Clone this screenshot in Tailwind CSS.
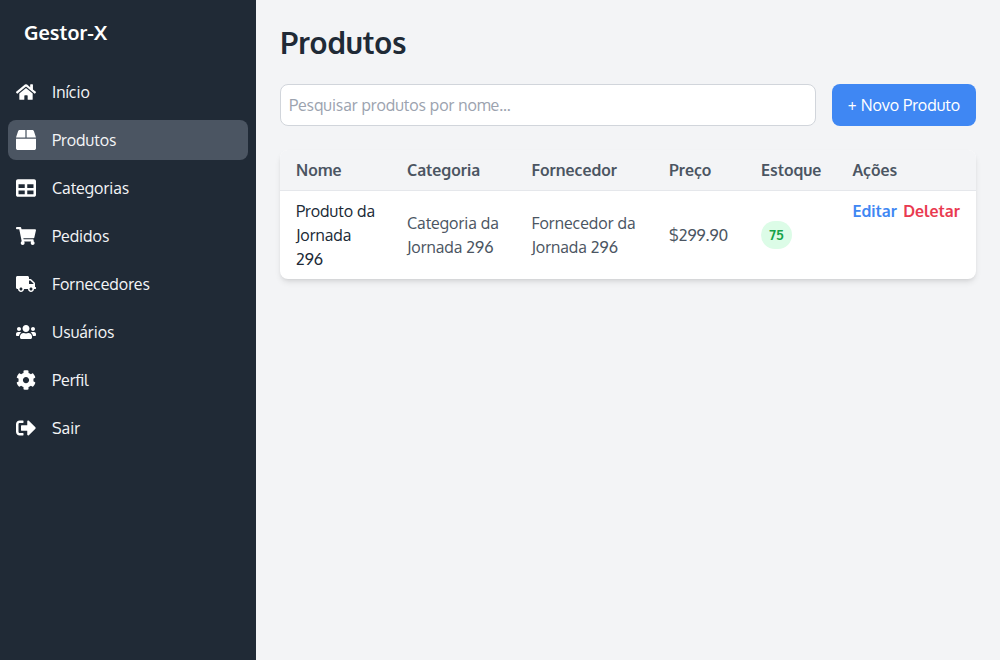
<!DOCTYPE html>
<html lang="pt-BR">
<head>
<meta charset="utf-8">
<title>Gestor-X</title>
<script src="https://cdn.jsdelivr.net/npm/@tailwindcss/browser@4"></script>
</head>
<body class="font-[Oxygen,'Noto_Sans',sans-serif]">
<div class="flex h-screen bg-[#f3f4f6]">
  <aside class="w-64 shrink-0 bg-[#202a36] text-white">
    <div class="px-6 pt-[18px] pb-[26px] text-xl leading-7 font-bold tracking-[0.1px]">Gestor-X</div>
    <nav class="flex flex-col gap-2 px-2">
      <a class="flex h-10 items-center gap-4 rounded-lg px-2"><svg class="size-5" fill="currentColor" viewBox="0 0 576 512"><path d="M280.37 148.26L96 300.11V464a16 16 0 0 0 16 16l112.06-.29a16 16 0 0 0 15.92-16V368a16 16 0 0 1 16-16h64a16 16 0 0 1 16 16v95.64a16 16 0 0 0 16 16.05L464 480a16 16 0 0 0 16-16V300L295.67 148.26a12.19 12.19 0 0 0-15.3 0zM571.6 251.47L488 182.56V44.05a12 12 0 0 0-12-12h-56a12 12 0 0 0-12 12v72.61L318.47 43a48 48 0 0 0-61 0L4.34 251.47a12 12 0 0 0-1.6 16.9l25.5 31A12 12 0 0 0 45.15 301l235.22-193.74a12.19 12.19 0 0 1 15.3 0L530.9 301a12 12 0 0 0 16.9-1.6l25.5-31a12 12 0 0 0-1.7-16.93z"/></svg><span class="text-gray-100">Início</span></a>
      <a class="flex h-10 items-center gap-4 rounded-lg bg-[#4b5562] px-2"><svg class="size-5" fill="currentColor" viewBox="0 0 512 512"><path d="M509.5 184.6L458.9 32.8C452.4 13.2 434.1 0 413.4 0H272v192h238.7c-.4-2.5-.4-5-1.2-7.4zM240 0H98.6c-20.7 0-39 13.2-45.5 32.8L2.5 184.6c-.8 2.4-.8 4.9-1.2 7.4H240V0zM0 224v240c0 26.5 21.5 48 48 48h416c26.5 0 48-21.5 48-48V224H0z"/></svg><span class="text-gray-100">Produtos</span></a>
      <a class="flex h-10 items-center gap-4 rounded-lg px-2"><svg class="size-5" fill="currentColor" viewBox="0 0 512 512"><path d="M464 32H48C21.49 32 0 53.49 0 80v352c0 26.51 21.49 48 48 48h416c26.51 0 48-21.49 48-48V80c0-26.51-21.49-48-48-48zM224 416H64v-96h160v96zm0-160H64v-96h160v96zm224 160H288v-96h160v96zm0-160H288v-96h160v96z"/></svg><span class="text-gray-100">Categorias</span></a>
      <a class="flex h-10 items-center gap-4 rounded-lg px-2"><svg class="size-5" fill="currentColor" viewBox="0 0 576 512"><path d="M528.12 301.319l47.273-208C578.806 78.301 567.391 64 551.99 64H159.208l-9.166-44.81C147.758 8.021 137.93 0 126.529 0H24C10.745 0 0 10.745 0 24v16c0 13.255 10.745 24 24 24h69.883l70.248 343.435C147.325 417.1 136 435.222 136 456c0 30.928 25.072 56 56 56s56-25.072 56-56c0-15.674-6.447-29.835-16.824-40h209.647C430.447 426.165 424 440.326 424 456c0 30.928 25.072 56 56 56s56-25.072 56-56c0-22.172-12.888-41.332-31.579-50.405l5.517-24.276c3.413-15.018-8.002-29.319-23.403-29.319H218.117l-6.545-32h293.145c11.206 0 20.92-7.754 23.403-18.681z"/></svg><span class="text-gray-100">Pedidos</span></a>
      <a class="flex h-10 items-center gap-4 rounded-lg px-2"><svg class="size-5" fill="currentColor" viewBox="0 0 640 512"><path d="M624 352h-16V243.9c0-12.7-5.1-24.9-14.1-33.9L494 110.1c-9-9-21.2-14.1-33.9-14.1H416V48c0-26.5-21.5-48-48-48H48C21.5 0 0 21.5 0 48v320c0 26.5 21.5 48 48 48h16c0 53 43 96 96 96s96-43 96-96h128c0 53 43 96 96 96s96-43 96-96h48c8.8 0 16-7.2 16-16v-32c0-8.8-7.2-16-16-16zM160 464c-26.5 0-48-21.5-48-48s21.5-48 48-48 48 21.5 48 48-21.5 48-48 48zm320 0c-26.5 0-48-21.5-48-48s21.5-48 48-48 48 21.5 48 48-21.5 48-48 48zm80-208H416V144h44.1l99.9 99.9V256z"/></svg><span class="text-gray-100">Fornecedores</span></a>
      <a class="flex h-10 items-center gap-4 rounded-lg px-2"><svg class="size-5" fill="currentColor" viewBox="0 0 640 512"><path d="M96 224c35.3 0 64-28.7 64-64s-28.7-64-64-64-64 28.7-64 64 28.7 64 64 64zm448 0c35.3 0 64-28.7 64-64s-28.7-64-64-64-64 28.7-64 64 28.7 64 64 64zm32 32h-64c-17.6 0-33.5 7.1-45.1 18.6 40.3 22.1 68.9 62 75.1 109.4h66c17.7 0 32-14.3 32-32v-32c0-35.3-28.7-64-64-64zm-256 0c61.9 0 112-50.1 112-112S381.9 32 320 32 208 82.1 208 144s50.1 112 112 112zm76.8 32h-8.3c-20.8 10-43.9 16-68.5 16s-47.6-6-68.5-16h-8.3C179.6 288 128 339.6 128 403.2V432c0 26.5 21.5 48 48 48h288c26.5 0 48-21.5 48-48v-28.8c0-63.6-51.6-115.2-115.2-115.2zm-223.7-13.4C161.5 263.1 145.6 256 128 256H64c-35.3 0-64 28.7-64 64v32c0 17.7 14.3 32 32 32h65.9c6.3-47.4 34.9-87.3 75.2-109.4z"/></svg><span class="text-gray-100">Usuários</span></a>
      <a class="flex h-10 items-center gap-4 rounded-lg px-2"><svg class="size-5" fill="currentColor" viewBox="0 0 512 512"><path d="M487.4 315.7l-42.6-24.6c4.3-23.2 4.3-47 0-70.2l42.6-24.6c4.9-2.8 7.1-8.6 5.5-14-11.1-35.6-30-67.8-54.7-94.6-3.8-4.1-10-5.1-14.8-2.3L380.8 110c-17.9-15.4-38.5-27.3-60.8-35.1V25.8c0-5.6-3.9-10.5-9.4-11.7-36.7-8.2-74.3-7.8-109.2 0-5.5 1.2-9.4 6.1-9.4 11.7V75c-22.2 7.9-42.8 19.8-60.8 35.1L88.7 85.5c-4.9-2.8-11-1.9-14.8 2.3-24.7 26.7-43.6 58.9-54.7 94.6-1.7 5.4.6 11.2 5.5 14L67.3 221c-4.3 23.2-4.3 47 0 70.2l-42.6 24.6c-4.9 2.8-7.1 8.6-5.5 14 11.1 35.6 30 67.8 54.7 94.6 3.8 4.1 10 5.1 14.8 2.3l42.6-24.6c17.9 15.4 38.5 27.3 60.8 35.1v49.2c0 5.6 3.9 10.5 9.4 11.7 36.7 8.2 74.3 7.8 109.2 0 5.5-1.2 9.4-6.1 9.4-11.7v-49.2c22.2-7.9 42.8-19.8 60.8-35.1l42.6 24.6c4.9 2.8 11 1.9 14.8-2.3 24.7-26.7 43.6-58.9 54.7-94.6 1.5-5.5-.7-11.3-5.6-14.1zM256 336c-44.1 0-80-35.9-80-80s35.9-80 80-80 80 35.9 80 80-35.9 80-80 80z"/></svg><span class="text-gray-100">Perfil</span></a>
      <a class="flex h-10 items-center gap-4 rounded-lg px-2"><svg class="size-5" fill="currentColor" viewBox="0 0 512 512"><path d="M497 273L329 441c-15 15-41 4.5-41-17v-96H152c-13.3 0-24-10.7-24-24v-96c0-13.3 10.7-24 24-24h136V88c0-21.4 25.9-32 41-17l168 168c9.3 9.4 9.3 24.6 0 34zM192 436v-40c0-6.6-5.4-12-12-12H96c-17.7 0-32-14.3-32-32V160c0-17.7 14.3-32 32-32h84c6.6 0 12-5.4 12-12V76c0-6.6-5.4-12-12-12H96c-53 0-96 43-96 96v192c0 53 43 96 96 96h84c6.6 0 12-5.4 12-12z"/></svg><span class="text-gray-100">Sair</span></a>
    </nav>
  </aside>
  <main class="flex-1 p-6">
    <h1 class="mb-6 text-3xl font-bold tracking-[-0.1px] text-[#202a36]">Produtos</h1>
    <div class="mb-6 flex gap-4">
      <input class="min-w-0 flex-1 rounded-lg border border-[#d1d5db] bg-white p-2 placeholder:tracking-[-0.05px] placeholder:text-[#9ca3af]" placeholder="Pesquisar produtos por nome...">
      <button class="w-36 rounded-lg bg-[#3f87f3] py-2 whitespace-nowrap text-white">+ Novo Produto</button>
    </div>
    <div class="overflow-hidden rounded-lg bg-white shadow-md">
      <table class="w-full table-fixed text-left">
        <colgroup><col class="w-[111px]"><col class="w-[124.5px]"><col class="w-[137.5px]"><col class="w-[92px]"><col class="w-[91.5px]"><col class="w-[139.5px]"></colgroup>
        <thead><tr class="border-b border-[#e5e7eb] bg-[#f3f4f6] text-[#4b5562]">
          <th class="px-4 py-2 font-semibold">Nome</th><th class="px-4 py-2 font-semibold">Categoria</th><th class="px-4 py-2 font-semibold">Fornecedor</th><th class="px-4 py-2 font-semibold">Preço</th><th class="px-4 py-2 font-semibold">Estoque</th><th class="px-4 py-2 font-semibold">Ações</th>
        </tr></thead>
        <tbody><tr class="text-[#4b5562]">
          <td class="px-4 py-2 text-[#202a36]"><span class="whitespace-nowrap">Produto da</span> Jornada <br>296</td><td class="px-4 py-2">Categoria da<br>Jornada 296</td><td class="px-4 py-2">Fornecedor da<br>Jornada 296</td><td class="px-4 py-2">$299.90</td>
          <td class="px-4 py-2"><span class="block w-fit rounded-full bg-[#dcfce7] px-2 py-1 text-sm leading-5 font-semibold text-[#16a34a]">75</span></td>
          <td class="py-2 pr-4 pl-4 align-top font-semibold"><div class="flex justify-between"><button class="text-[#3f87f3]">Editar</button><button class="text-[#e93a50]">Deletar</button></div></td>
        </tr></tbody>
      </table>
    </div>
  </main>
</div>
</body>
</html>
